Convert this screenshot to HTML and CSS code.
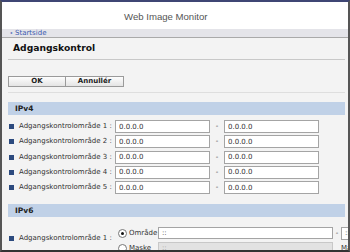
FILE: index.html
```html
<!DOCTYPE html>
<html>
<head>
<meta charset="utf-8">
<link rel="stylesheet" href="styles.css">
</head>
<body>
<div class="frame">
  <div class="header"><span class="app-title">Web Image Monitor</span></div>
  <div class="crumb"><span class="arrow">&#9666;</span><a class="crumb-link">Startside</a></div>
  <div class="main">
    <div class="page-title">Adgangskontrol</div>
    <div class="buttons">
      <button class="btn">OK</button><button class="btn">Annullér</button>
    </div>
    <div class="sep"></div>
    <div class="section">IPv4</div>
    <div class="rows">
      <div class="row"><span class="bullet"></span><span class="label">Adgangskontrolområde 1 :</span><input class="field" value="0.0.0.0"><span class="dash">-</span><input class="field" value="0.0.0.0"></div>
      <div class="row"><span class="bullet"></span><span class="label">Adgangskontrolområde 2 :</span><input class="field" value="0.0.0.0"><span class="dash">-</span><input class="field" value="0.0.0.0"></div>
      <div class="row"><span class="bullet"></span><span class="label">Adgangskontrolområde 3 :</span><input class="field" value="0.0.0.0"><span class="dash">-</span><input class="field" value="0.0.0.0"></div>
      <div class="row"><span class="bullet"></span><span class="label">Adgangskontrolområde 4 :</span><input class="field" value="0.0.0.0"><span class="dash">-</span><input class="field" value="0.0.0.0"></div>
      <div class="row"><span class="bullet"></span><span class="label">Adgangskontrolområde 5 :</span><input class="field" value="0.0.0.0"><span class="dash">-</span><input class="field" value="0.0.0.0"></div>
    </div>
    <div class="section section6">IPv6</div>
    <div class="v6">
      <div class="v6-label"><span class="bullet"></span><span class="label">Adgangskontrolområde 1 :</span></div>
      <div class="v6-opts">
        <div class="opt"><span class="radio checked"></span><span class="opt-text">Område</span><input class="field wide" value="::"><span class="dash">-</span><input class="field" value="::"></div>
        <div class="opt"><span class="radio"></span><span class="opt-text">Maske</span><input class="field wide off" value="::" disabled><span class="dash"></span><span class="opt-text">Maske</span></div>
      </div>
    </div>
  </div>
</div>
</body>
</html>
```
FILE: styles.css
```css
html, body {
  margin: 0;
  padding: 0;
  background: #ffffff;
}
.frame {
  width: 350px;
  height: 252px;
  box-sizing: border-box;
  border-top: 2px solid #3f4674;
  border-left: 2px solid #555555;
  border-right: 2px solid #555555;
  border-bottom: 2px solid #333333;
  background: #f3f3f3;
  overflow: hidden;
  font-family: "DejaVu Sans", Verdana, sans-serif;
  font-size: 7px;
  color: #333333;
}
.header {
  height: 27px;
  background: #ffffff;
  padding-left: 122px;
  box-sizing: border-box;
  padding-top: 9px;
}
.app-title {
  font-family: "Liberation Sans", Arial, sans-serif;
  font-size: 9.6px;
  color: #555555;
  line-height: 12px;
  display: block;
}
.crumb {
  height: 8px;
  background: #e4e4e9;
  border-bottom: 1px solid #a9a9a9;
  display: flex;
  align-items: center;
  padding-left: 8px;
  line-height: 8px;
}
.arrow {
  font-size: 4px;
  color: #3b5bb0;
  margin-right: 3px;
}
.crumb-link {
  color: #3b5bb0;
  font-size: 7px;
}
.main {
  padding: 0 3px 0 6px;
}
.page-title {
  height: 22px;
  box-sizing: border-box;
  border-bottom: 1px solid #c8c8c8;
  padding-left: 5px;
  font-weight: bold;
  font-size: 9.2px;
  color: #111111;
  display: flex;
  align-items: center;
  padding-bottom: 2px;
}
.buttons {
  margin-top: 16px;
  display: flex;
}
.btn {
  width: 58px;
  height: 11px;
  padding: 0;
  margin: 0;
  border: 1px solid #9a9a9a;
  background: linear-gradient(#fdfdfd, #e4e4e4);
  font-family: "DejaVu Sans", Verdana, sans-serif;
  font-weight: bold;
  font-size: 7px;
  line-height: 9px;
  color: #222222;
  box-sizing: border-box;
}
.btn + .btn {
  border-left: none;
}
.sep {
  margin-top: 5px;
  height: 1px;
  background: #dedede;
}
.section {
  margin-top: 9px;
  height: 13px;
  background: #c0d1e7;
  font-weight: bold;
  font-size: 7.5px;
  color: #222222;
  padding-left: 7px;
  display: flex;
  align-items: center;
}
.rows {
  margin-top: 5px;
}
.row {
  height: 15.25px;
  display: flex;
  align-items: flex-start;
}
.bullet {
  width: 5px;
  height: 5px;
  background: #2c4a7e;
  margin-left: 1px;
  margin-right: 5px;
  flex: none;
}
.row .bullet {
  margin-top: 4px;
}
.label {
  width: 96px;
  flex: none;
  line-height: 13px;
  white-space: nowrap;
  color: #333333;
}
.field {
  width: 95px;
  height: 13px;
  box-sizing: border-box;
  border: 1px solid #a4a4a4;
  background: #ffffff;
  margin: 0;
  padding: 0 0 0 3px;
  font-family: "DejaVu Sans", Verdana, sans-serif;
  font-size: 7px;
  color: #333333;
  flex: none;
}
.dash {
  width: 14px;
  text-align: center;
  line-height: 13px;
  flex: none;
}
.section6 {
  margin-top: 8px;
}
.v6 {
  display: flex;
  margin-top: 10px;
}
.v6-label {
  display: flex;
  align-items: center;
  height: 22px;
}
.v6-label .label {
  width: 99px;
}
.opt {
  display: flex;
  align-items: center;
  height: 12px;
  margin-bottom: 3px;
}
.radio {
  width: 7px;
  height: 7px;
  border: 1px solid #777777;
  border-radius: 50%;
  background: #ffffff;
  margin-right: 2px;
  position: relative;
  flex: none;
}
.radio.checked::after {
  content: "";
  position: absolute;
  left: 2px;
  top: 2px;
  width: 3px;
  height: 3px;
  border-radius: 50%;
  background: #111111;
}
.opt-text {
  width: 29px;
  flex: none;
  color: #333333;
}
.field.wide {
  width: 175px;
  height: 12px;
}
.field.off {
  background: #e2e2e2;
  border-color: #c8c8c8;
  color: #999999;
}
.opt .dash {
  width: 8px;
}
```
